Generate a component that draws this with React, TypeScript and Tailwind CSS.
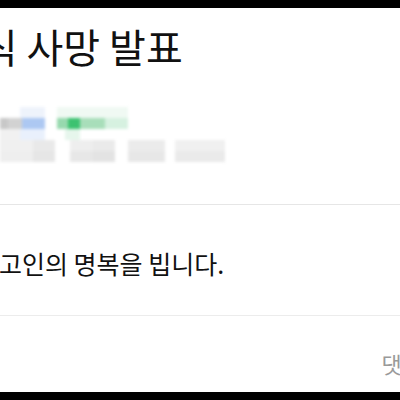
import React from "react";

const cells = (list: [number, string][]) => (
	<div className="flex h-[11px]">
		{list.map(([w, c], i) => (
			<div key={i} className="h-full" style={{ width: w, background: c }} />
		))}
	</div>
);

const App: React.FC = () => {
	return (
		<div className="w-[400px] h-[400px] overflow-hidden bg-white flex flex-col font-['Noto_Sans_CJK_KR',sans-serif]">
			<div className="h-[8px] bg-black shrink-0" />
			<div className="pt-[14px] -ml-[56px] whitespace-nowrap text-[40px] leading-[48px] text-[#111]">
				공식 사망 발표
			</div>
			{/* blurred author / date */}
			<div className="mt-[37px] flex flex-col blur-[1.5px]">
				{cells([[20, "#fff"], [25, "#eef3fb"], [12, "#fff"], [71, "#f0f9f3"]])}
				{cells([[8, "#c8c8c8"], [14, "#d2d2d2"], [23, "#adc8f2"], [12, "#fff"], [11, "#97d9ae"], [12, "#3cc270"], [25, "#a8deba"], [23, "#d6f1e0"]])}
				{cells([[20, "#f1f1f1"], [25, "#e9f0fc"], [20, "#fff"], [15, "#e6f6ec"]])}
				{cells([[33, "#f0f0f0"], [22, "#e9e9e9"], [15, "#fff"], [22, "#eeeeee"], [23, "#eaeaea"], [13, "#fff"], [37, "#ebebeb"], [10, "#fff"], [50, "#f0f0f0"]])}
				{cells([[33, "#eeeeee"], [22, "#e6e6e6"], [15, "#fff"], [22, "#e7e7e7"], [23, "#e3e3e3"], [13, "#fff"], [37, "#e7e7e7"], [10, "#fff"], [50, "#eaeaea"]])}
			</div>
			<div className="mt-[42px] h-px bg-[#e6e6e6]" />
			<div className="pt-[42px] pb-[36px] -ml-px text-[25px] leading-[32px] text-[#111] whitespace-nowrap">
				고인의 명복을 빕니다.
			</div>
			<div className="h-px bg-[#ececec]" />
			<div className="flex justify-end pt-[33px] -mr-[22px] text-[22px] leading-[28px] text-[#9a9a9a]">
				댓글
			</div>
			<div className="mt-auto h-[8px] bg-black shrink-0" />
		</div>
	);
};

export default App;
